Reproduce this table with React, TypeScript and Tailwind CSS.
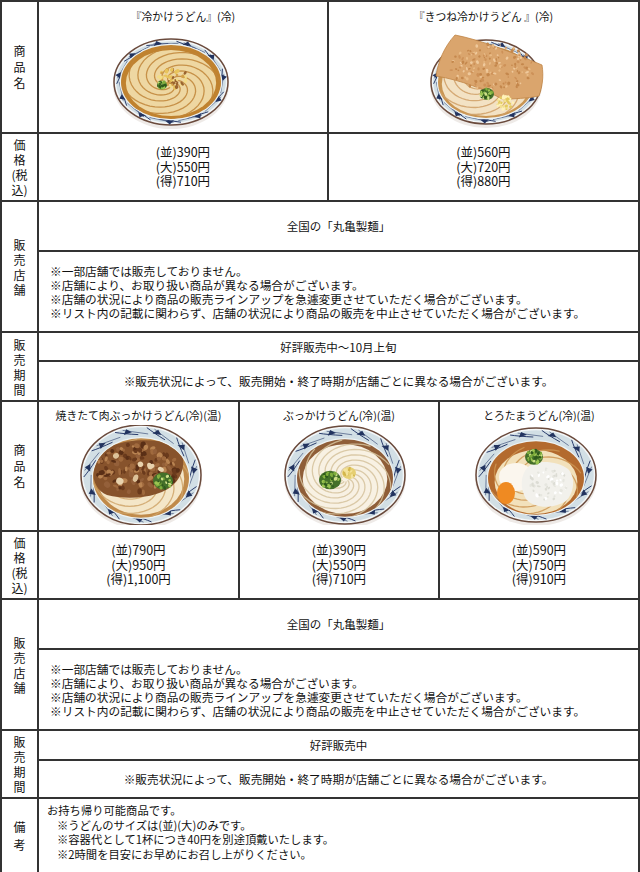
import React from "react";

// deterministic scatter for food textures
const rng = (seed: number) => {
  let s = seed;
  return () => {
    s = (s * 9301 + 49297) % 233280;
    return s / 233280;
  };
};

type Speck = { x: number; y: number; rx: number; ry: number; c: string; r: number };

const specks = (
  seed: number,
  n: number,
  cx: number,
  cy: number,
  w: number,
  h: number,
  colors: string[],
  min: number,
  max: number
): Speck[] => {
  const r = rng(seed);
  const out: Speck[] = [];
  for (let i = 0; i < n; i++) {
    const a = r() * Math.PI * 2;
    const d = Math.sqrt(r());
    out.push({
      x: cx + Math.cos(a) * d * w,
      y: cy + Math.sin(a) * d * h,
      rx: min + r() * (max - min),
      ry: min + r() * (max - min) * 0.7,
      c: colors[Math.floor(r() * colors.length)],
      r: r() * 180,
    });
  }
  return out;
};

const Specks = ({ list }: { list: Speck[] }) => (
  <>
    {list.map((s, i) => (
      <ellipse
        key={i}
        cx={s.x}
        cy={s.y}
        rx={s.rx}
        ry={s.ry}
        fill={s.c}
        transform={`rotate(${s.r} ${s.x} ${s.y})`}
      />
    ))}
  </>
);

const spiral = (rx: number, ry: number, a0: number, span: number, r0: number, r1: number, dy = 0, n = 30) => {
  let d = "";
  for (let i = 0; i <= n; i++) {
    const t = i / n;
    const a = ((a0 + span * t) * Math.PI) / 180;
    const r = r0 + (r1 - r0) * t;
    d += (i ? " L" : "M") + (r * rx * Math.cos(a)).toFixed(1) + " " + (dy + r * ry * Math.sin(a)).toFixed(1);
  }
  return d;
};

// cream noodle mass with thin shaded seams swirling in
const Noodles = ({
  rx,
  ry,
  dy = 0,
  starts,
  span,
  body,
  seam,
}: {
  rx: number;
  ry: number;
  dy?: number;
  starts: number[];
  span: number;
  body: string;
  seam: string;
}) => (
  <g fill="none" strokeLinecap="round">
    <ellipse cy={dy} rx={rx * 0.94} ry={ry * 0.94} fill={body} />
    {starts.map((a) => (
      <path key={a} d={spiral(rx, ry, a, span, 0.08, 1.05, dy)} stroke={seam} strokeWidth={1.3} opacity={0.85} />
    ))}
  </g>
);

const Onion = ({ x, y, r, seed }: { x: number; y: number; r: number; seed: number }) => (
  <g>
    <ellipse cx={x} cy={y} rx={r} ry={r * 0.85} fill="#44702a" />
    <Specks list={specks(seed, 26, x, y, r * 0.9, r * 0.75, ["#7fae3c", "#9bc552", "#2f5a1c", "#cfe08a"], 0.9, 2.2)} />
  </g>
);

function Bowl({
  id,
  rx,
  ry,
  band,
  dy = 0,
  children,
  over,
}: {
  id: string;
  rx: number;
  ry: number;
  band: number;
  dy?: number;
  children?: React.ReactNode;
  over?: React.ReactNode;
}) {
  const fx = rx - band;
  const fy = ry - band * 0.85;
  const p = (a: number, k: number): [number, number] => [k * rx * Math.cos(a), k * ry * Math.sin(a)];
  const kIn = 1 - band / rx;
  const marks = Array.from({ length: 11 }, (_, i) => (i / 11) * Math.PI * 2 + 0.25);
  return (
    <g>
      <ellipse cy={3} rx={rx + 1} ry={ry + 1} fill="#ddd6d0" opacity={0.5} />
      <ellipse rx={rx} ry={ry} fill="#f4f7f8" stroke="#6a4a3c" strokeWidth={1.5} />
      <ellipse rx={rx - 2.2} ry={ry - 2.2} fill="#d2dfe5" />
      <g stroke="#2a3c6c" strokeWidth={1} fill="none" strokeLinecap="round">
        {marks.map((a, i) => {
          const [x1, y1] = p(a, 0.95);
          const [x2, y2] = p(a + 0.4, kIn + 0.01);
          const [cx, cy] = p(a + 0.12, (0.95 + kIn) / 2);
          const [x3, y3] = p(a + 0.14, 0.94);
          const [x4, y4] = p(a + 0.6, kIn + 0.03);
          return (
            <g key={i}>
              <path d={`M${x1} ${y1} Q${cx} ${cy} ${x2} ${y2}`} />
              <path d={`M${x3} ${y3} L${x4} ${y4}`} strokeWidth={0.6} />
            </g>
          );
        })}
      </g>
      <g fill="#22335f">
        {marks.map((a, i) => {
          const km = (1 + kIn) / 2;
          const [x1, y1] = p(a + 0.2, km + 0.05);
          const [x2, y2] = p(a + 0.29, km - 0.03);
          const [x3, y3] = p(a + 0.12, km - 0.05);
          return <path key={i} d={`M${x1} ${y1} L${x2} ${y2} L${x3} ${y3} Z`} />;
        })}
      </g>
      <defs>
        <clipPath id={id}>
          <ellipse cy={dy} rx={fx} ry={fy} />
        </clipPath>
      </defs>
      <ellipse cy={dy} rx={fx + 1.2} ry={fy + 1.2} fill="#eef3f4" />
      <g clipPath={`url(#${id})`}>{children}</g>
      {over}
    </g>
  );
}

const Svg = ({ children, ox = 0 }: { children: React.ReactNode; ox?: number }) => (
  <svg width="140" height="100" viewBox="-70 -50 140 100" className="mx-auto block">
    <g transform={`translate(${ox} 0)`}>{children}</g>
  </svg>
);

const HiyaKake = () => (
  <Svg ox={-12}>
    <Bowl id="b1" rx={57} ry={43} band={7}>
      <ellipse rx={52} ry={40} fill="#c0822f" />
      <Noodles rx={48} ry={35} dy={1} starts={[0, 45, 90, 135, 180, 225, 270, 315]} span={230} body="#eed7a2" seam="#c08538" />
      <Specks list={specks(3, 45, 2, -4, 15, 10, ["#e8c45c", "#f2dc88", "#9a6430", "#d3a04a"], 1, 2.4)} />
      <Onion x={-9} y={3} r={5} seed={11} />
    </Bowl>
  </Svg>
);

const Kitsune = () => (
  <Svg ox={2}>
    <Bowl
      id="b2"
      rx={55}
      ry={42}
      band={7}
      over={
        <g>
          <path
            d="M-31 -47 C-5 -42 25 -30 56 -17 C58 -5 56 6 53 14 C40 17 28 16 18 18 C0 8 -25 -2 -50 -6 C-48 -20 -42 -35 -31 -47 Z"
            fill="#daa56d"
            stroke="#c08546"
            strokeWidth={0.8}
          />
          <Specks list={specks(21, 160, 6, -14, 42, 24, ["#e8bb86", "#cd9158", "#efc99c", "#c4874c"], 0.7, 2)} />
          <Onion x={1} y={12} r={7} seed={5} />
          <Specks list={specks(8, 34, 19, 21, 9, 7, ["#f2e08e", "#e3c95e", "#fff2b8"], 0.9, 2.2)} />
        </g>
      }
    >
      <ellipse rx={52} ry={40} fill="#c99552" />
      <Noodles rx={47} ry={34} dy={2} starts={[20, 65, 110, 155, 200, 245, 290, 335]} span={200} body="#f3e2c4" seam="#cf9f66" />
    </Bowl>
  </Svg>
);

const NikuBukkake = () => (
  <Svg ox={2}>
    <Bowl id="b3" rx={60} ry={50} band={12} dy={3}>
      <ellipse cy={3} rx={52} ry={44} fill="#c08a4a" />
      <Noodles rx={46} ry={38} dy={4} starts={[0, 45, 90, 135, 180, 225, 270, 315]} span={220} body="#f4e6c8" seam="#cfa56a" />
      <path
        d="M-46 -14 C-40 -34 6 -40 34 -30 C46 -22 44 -2 34 8 C22 22 -10 26 -34 20 C-48 14 -50 -2 -46 -14 Z"
        fill="#87532c"
      />
      <Specks
        list={specks(31, 150, -4, -6, 41, 25, ["#6a3a1c", "#a06a3e", "#b98452", "#5a2f16", "#94603a"], 1.2, 3.6)}
      />
      <Specks list={specks(44, 7, -10, -6, 30, 18, ["#e8d2ad", "#dcc29a"], 2, 4)} />
      <Onion x={22} y={6} r={10} seed={17} />
    </Bowl>
  </Svg>
);

const Bukkake = () => (
  <Svg ox={6}>
    <Bowl id="b4" rx={60} ry={49} band={12} dy={3}>
      <ellipse cy={3} rx={52} ry={44} fill="#8f5e38" />
      <Noodles
        rx={45}
        ry={37}
        dy={4}
        starts={[0, 36, 72, 108, 144, 180, 216, 252, 288, 324]}
        span={230}
        body="#f8f1e3"
        seam="#d5c29c"
      />
      <Onion x={-15} y={5} r={11} seed={29} />
      <ellipse cx={4} cy={-2} rx={7} ry={6} fill="#e6cf72" />
      <Specks list={specks(12, 18, 4, -2, 6, 5, ["#f4e39a", "#d3b64c"], 0.8, 2)} />
    </Bowl>
  </Svg>
);

const Torotama = () => (
  <Svg ox={-3}>
    <Bowl id="b5" rx={60} ry={47} band={12} dy={3}>
      <ellipse cy={3} rx={52} ry={42} fill="#b36a2e" />
      <Noodles rx={44} ry={34} dy={7} starts={[10, 55, 100, 145, 190, 235, 280, 325]} span={200} body="#f2e1bb" seam="#cc9552" />
      <ellipse cx={-20} cy={2} rx={17} ry={14} fill="#fbf6ee" />
      <ellipse cx={-30} cy={18} rx={9} ry={11} fill="#ef8a22" />
      <path
        d="M-8 -8 C0 -16 22 -14 32 -6 C40 2 38 18 30 26 C18 34 -2 34 -10 24 C-16 14 -16 0 -8 -8 Z"
        fill="#f2f1ec"
      />
      <Specks list={specks(51, 60, 12, 9, 20, 16, ["#dcdcd4", "#e6e6df", "#ffffff"], 0.8, 2)} />
      <Onion x={-2} y={-18} r={9} seed={37} />
    </Bowl>
  </Svg>
);

const Label = ({ lines, rowSpan = 1, lh = "leading-[15px]" }: { lines: string[]; rowSpan?: number; lh?: string }) => (
  <td rowSpan={rowSpan} className={`border-2 border-[#333] text-center align-middle text-[12px] ${lh}`}>
    {lines.map((l, i) => (
      <div key={i}>{l}</div>
    ))}
  </td>
);

const Price = ({ lines, colSpan }: { lines: string[]; colSpan: number }) => (
  <td colSpan={colSpan} className="border-2 border-[#333] text-center align-middle text-[12.5px] leading-[14.5px]">
    {lines.map((l) => (
      <div key={l}>{l}</div>
    ))}
  </td>
);

const Product = ({
  title,
  colSpan,
  pt,
  mt,
  children,
}: {
  title: string;
  colSpan: number;
  pt: string;
  mt: string;
  children: React.ReactNode;
}) => (
  <td colSpan={colSpan} className={`border-2 border-[#333] text-center align-top ${pt}`}>
    <div className="text-[10.8px] leading-[14px]">{title}</div>
    <div className={mt}>{children}</div>
  </td>
);

const storeNotes = [
  "※一部店舗では販売しておりません。",
  "※店舗により、お取り扱い商品が異なる場合がございます。",
  "※店舗の状況により商品の販売ラインアップを急遽変更させていただく場合がございます。",
  "※リスト内の記載に関わらず、店舗の状況により商品の販売を中止させていただく場合がございます。",
];

const Store = () => (
  <>
    <tr className="h-[50px]">
      <Label lines={["販", "売", "店", "舗"]} rowSpan={2} />
      <td colSpan={4} className="border-2 border-[#333] text-center align-middle text-[11.5px] leading-[14px]">
        全国の「丸亀製麺」
      </td>
    </tr>
    <tr className="h-[81px]">
      <td colSpan={4} className="border-2 border-[#333] px-[11px] align-middle text-[11.7px] leading-[14px]">
        {storeNotes.map((n) => (
          <div key={n}>{n}</div>
        ))}
      </td>
    </tr>
  </>
);

const Period = ({ text, h1, h2 }: { text: string; h1: string; h2: string }) => (
  <>
    <tr className={h1}>
      <Label lines={["販", "売", "期", "間"]} rowSpan={2} />
      <td colSpan={4} className="border-2 border-[#333] text-center align-middle text-[11.5px] leading-[14px]">
        {text}
      </td>
    </tr>
    <tr className={h2}>
      <td colSpan={4} className="border-2 border-[#333] text-center align-middle text-[11.7px] leading-[14px]">
        ※販売状況によって、販売開始・終了時期が店舗ごとに異なる場合がございます。
      </td>
    </tr>
  </>
);

export default function App() {
  return (
    <div className="w-[640px] bg-white font-['Noto_Sans_CJK_JP','Noto_Sans',sans-serif] text-[#111]">
      <table className="w-[640px] table-fixed border-collapse">
        <colgroup>
          <col className="w-[37px]" />
          <col className="w-[201px]" />
          <col className="w-[89px]" />
          <col className="w-[111px]" />
          <col />
        </colgroup>
        <tbody>
          <tr className="h-[131px]">
            <Label lines={["商", "品", "名"]} lh="leading-[16px]" />
            <Product title="『冷かけうどん』(冷)" colSpan={2} pt="pt-[7px]" mt="mt-[9px]">
              <HiyaKake />
            </Product>
            <Product title="『きつね冷かけうどん 』(冷)" colSpan={2} pt="pt-[7px]" mt="mt-[9px]">
              <Kitsune />
            </Product>
          </tr>
          <tr className="h-[68px]">
            <Label lines={["価", "格", "(税", "込)"]} />
            <Price colSpan={2} lines={["(並)390円", "(大)550円", "(得)710円"]} />
            <Price colSpan={2} lines={["(並)560円", "(大)720円", "(得)880円"]} />
          </tr>
          <Store />
          <Period text="好評販売中～10月上旬" h1="h-[29px]" h2="h-[40px]" />

          <tr className="h-[130px]">
            <Label lines={["商", "品", "名"]} lh="leading-[16px]" />
            <Product title="焼きたて肉ぶっかけうどん(冷)(温)" colSpan={1} pt="pt-[6px]" mt="mt-[3px]">
              <NikuBukkake />
            </Product>
            <Product title="ぶっかけうどん(冷)(温)" colSpan={2} pt="pt-[6px]" mt="mt-[3px]">
              <Bukkake />
            </Product>
            <Product title="とろたまうどん(冷)(温)" colSpan={1} pt="pt-[6px]" mt="mt-[3px]">
              <Torotama />
            </Product>
          </tr>
          <tr className="h-[68px]">
            <Label lines={["価", "格", "(税", "込)"]} />
            <Price colSpan={1} lines={["(並)790円", "(大)950円", "(得)1,100円"]} />
            <Price colSpan={2} lines={["(並)390円", "(大)550円", "(得)710円"]} />
            <Price colSpan={1} lines={["(並)590円", "(大)750円", "(得)910円"]} />
          </tr>
          <Store />
          <Period text="好評販売中" h1="h-[30px]" h2="h-[38px]" />
          <tr className="h-[75px]">
            <Label lines={["備", "考"]} lh="leading-[18px]" />
            <td
              colSpan={4}
              className="border-2 border-[#333] px-[8px] pt-[4px] align-top text-[11.3px] leading-[14.7px]"
            >
              <div>お持ち帰り可能商品です。</div>
              <div className="pl-[10px]">※うどんのサイズは(並)(大)のみです。</div>
              <div className="pl-[10px]">※容器代として1杯につき40円を別途頂戴いたします。</div>
              <div className="pl-[10px]">※2時間を目安にお早めにお召し上がりください。</div>
            </td>
          </tr>
        </tbody>
      </table>
    </div>
  );
}
